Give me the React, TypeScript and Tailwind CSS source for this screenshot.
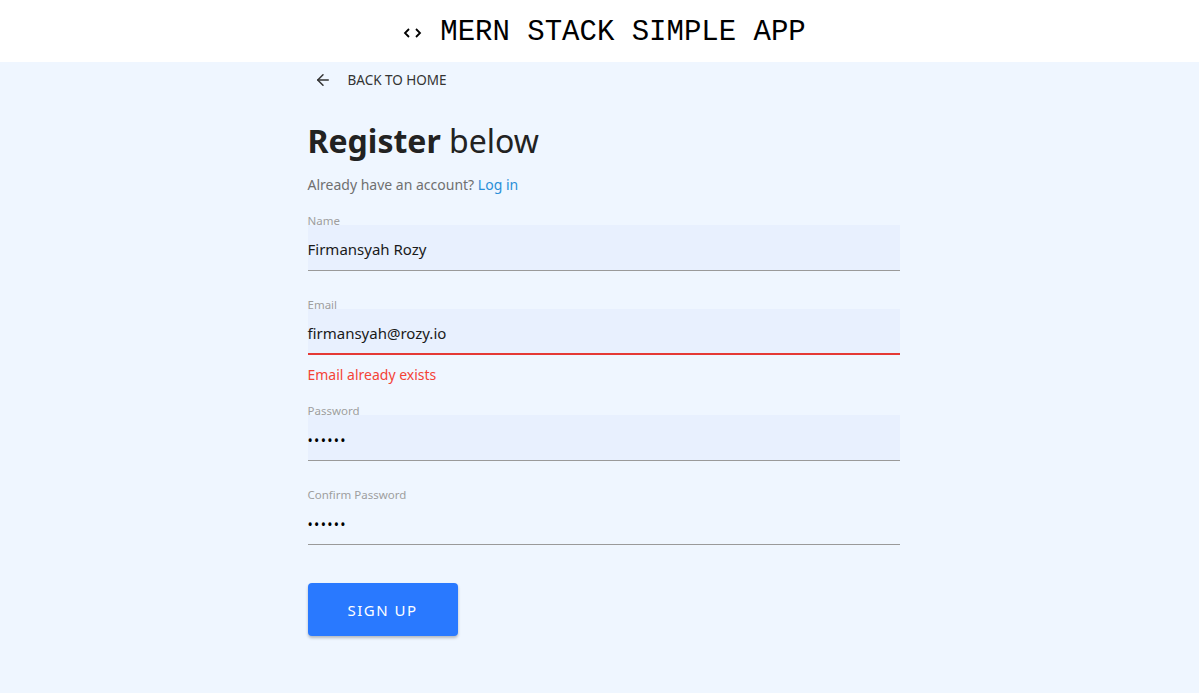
import { ArrowLeft } from "lucide-react";

const fields = [
  { label: "Name", value: "Firmansyah Rozy", filled: true },
  { label: "Email", value: "firmansyah@rozy.io", filled: true, error: "Email already exists" },
  { label: "Password", value: "••••••", filled: true, secret: true },
  { label: "Confirm Password", value: "••••••", filled: false, secret: true },
];

function Field({
  label,
  value,
  filled,
  error,
  secret,
}: {
  label: string;
  value: string;
  filled: boolean;
  error?: string;
  secret?: boolean;
}) {
  return (
    <div className="flex flex-col">
      <label className="h-[9px] text-[11.5px] leading-[9px] text-[#9e9e9e]">{label}</label>
      <div
        className={`flex h-[46px] items-center ${secret ? "pt-[5px]" : "pt-[3px]"} ${
          filled ? "bg-[#e8f0fe]" : ""
        } ${error ? "border-b-2 border-[#e53935]" : "border-b border-[#9a9a9a]"}`}
      >
        <span
          className={
            secret
              ? "text-[14px] tracking-[1.3px] text-black"
              : "text-[15px] text-[#1a1a1a]"
          }
        >
          {value}
        </span>
      </div>
      {error && <p className="mt-[10px] text-[14px] leading-5 text-[#f44336]">{error}</p>}
    </div>
  );
}

export default function App() {
  return (
    <div className="min-h-[693px] bg-[#eff6ff] font-['Noto_Sans',sans-serif]">
      <header className="flex h-[62px] items-center justify-center bg-white pt-[3px]">
        <h1 className="ml-[8px] flex items-center font-['Liberation_Mono',monospace] text-[29px] text-black">
          <svg width="22" height="14" viewBox="0 0 22 14" fill="none" stroke="black" strokeWidth="1.8" className="mr-[17px]">
            <path d="M8 3 L4 7 L8 11" />
            <path d="M15 3 L19 7 L15 11" />
          </svg>
          MERN STACK SIMPLE APP
        </h1>
      </header>

      <main className="mx-auto w-[600px] pl-2">
        <a className="mt-[8px] flex items-center gap-[16px] pl-[6px] text-[13.5px] uppercase text-[#333]">
          <ArrowLeft className="h-[18px] w-[18px]" strokeWidth={2} />
          Back to home
        </a>

        <h2 className="mt-[31px] text-[32px] leading-[40px] text-[#222]">
          <span className="font-bold">Register</span> below
        </h2>

        <p className="mt-[14px] text-[14px] leading-5 text-[#707070]">
          Already have an account? <span className="text-[#2a8fd8]">Log in</span>
        </p>

        <div className="mt-[21px] flex w-[592px] flex-col gap-[29px]">
          {fields.map((f, i) => (
            <div key={f.label} className={i === 2 ? "-mt-[8px]" : ""}>
              <Field {...f} />
            </div>
          ))}
        </div>

        <button className="mt-[38px] h-[53px] w-[150px] rounded-[4px] bg-[#2979ff] text-[15px] tracking-[1.5px] text-white shadow-[0_2px_3px_rgba(0,0,0,0.25)]">
          SIGN UP
        </button>
      </main>
    </div>
  );
}
